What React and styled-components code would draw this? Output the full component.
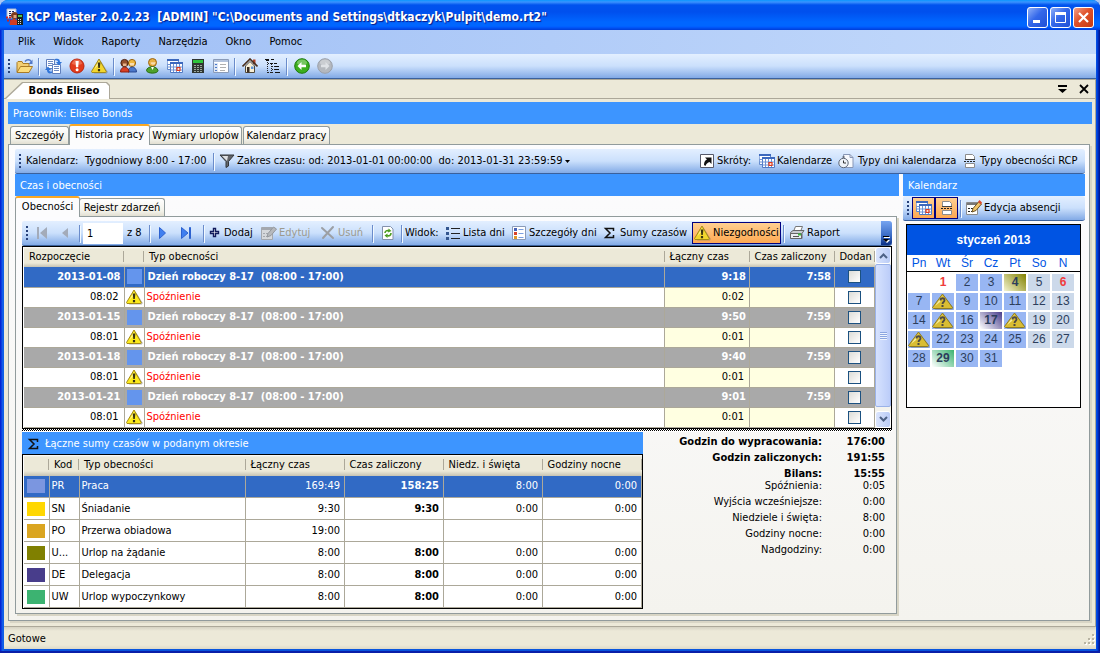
import React from "react";
import styled, { createGlobalStyle, css } from "styled-components";

const c = {
  chrome: "#ece9d8",
  bar: "#3d95ff",
  select: "#316ac5",
  group: "#a9a9a9",
  line: "#aca899",
  tabLine: "#919b9c",
};

const Global = createGlobalStyle`
  *, *::before, *::after { box-sizing: border-box; }
  html, body { margin: 0; background: #a9c8f5; }
  body, button, input, table {
    font-family: "DejaVu Sans Condensed", Tahoma, "DejaVu Sans", sans-serif;
    font-size: 11px;
    line-height: 14px;
    color: #000;
  }
  button, input { margin: 0; padding: 0; border: 0; background: none; border-radius: 0; }
  table { border-collapse: collapse; table-layout: fixed; }
  svg { display: block; flex: none; }
`;

/* ---------- icons ---------- */
const Svg = ({ w = 16, h = 16, children }) => (
  <svg width={w} height={h} viewBox={`0 0 ${w} ${h}`} aria-hidden="true">{children}</svg>
);
const AppIcon = () => (
  <Svg w={18} h={18}>
    <path d="M1 1h9v9H1z" fill="#f4f6fa" stroke="#a9b6cf" />
    <path d="M3 3.500h5M3 5.500h3M3 7.500h3" stroke="#1d2a66" strokeDasharray="2 1" />
    <path d="M0 9.500h5M1 12.500h4" stroke="#c22" strokeWidth="2" strokeDasharray="2 1" />
    <circle cx="8.500" cy="7.500" r="3.500" fill="#7c3a1c" />
    <path d="M7.500 7h3v3h-3z" fill="#e2a679" />
    <path d="M3.500 17c0-8 9-8 9 0z" fill="#d23b22" />
    <path d="M11 6h6v11h-6z" fill="#1c221e" />
    <path d="M12 7h4v2h-4z" fill="#4fc64f" />
    <path d="M12 11.500h4M12 13.500h4M12 15.500h4" stroke="#ddd" strokeDasharray="1 1" />
  </Svg>
);
const Folder = () => (
  <Svg w={18} h={16}>
    <path d="M1 14V4.500L2 3.500h4l1 2h6v3" fill="#f3cf72" stroke="#a97b26" />
    <path d="M1 14.500 4.500 8.500H16.500L13 14.500z" fill="#fbdc7c" stroke="#a97b26" />
    <path d="M9 3.500c2-2.500 5-2 6 0" fill="none" stroke="#5078c8" strokeWidth="1.400" />
    <path d="M16.500 1.500V6h-4z" fill="#5078c8" />
  </Svg>
);
const Sync = () => (
  <Svg w={18} h={16}>
    <path d="M1.500 1.500h8v9h-8z" fill="#fff" stroke="#5f7fbd" />
    <path d="M7.500 6.500h8v9h-8z" fill="#fff" stroke="#5f7fbd" />
    <path d="M3 3.500h5M3 5.500h5M3 7.500h5M9 8.500h5M9 10.500h5M9 12.500h5" stroke="#6d8ac2" />
    <path d="M10 1c3-1 5 0 5 3h2l-3 3.500L11 4h2c0-1-1-2-3-1.500z" fill="#2f74d8" />
    <path d="M7 15c-3 1-5 0-5-3H0l3-3.500L6 12H4c0 1 1 2 3 1.500z" fill="#2f74d8" />
  </Svg>
);
const RedAlert = () => (
  <Svg>
    <circle cx="8" cy="8" r="7" fill="#e23b1c" stroke="#b8260f" />
    <path d="M3 6a5 4.500 0 0 1 10 0 8 4 0 0 1-10 0z" fill="#f58a6e" opacity=".6" />
    <path d="M6.500 3h3.200L9.200 9.300H7z" fill="#fff" />
    <circle cx="8.100" cy="11.700" r="1.500" fill="#fff" />
  </Svg>
);
const Warn = ({ bright }) => (
  <Svg w={17} h={16}>
    <path d="M9.500 2.500 16.800 14l-1 1.500H3z" fill="#7d7a66" opacity=".55" />
    <path d="M8 1 15.200 13.500 14.500 14.500H1L.5 13.500z" fill={bright ? "#fcea1c" : "#f2d62e"} stroke="#a58b16" strokeLinejoin="round" />
    <path d="M8 2.500 3.500 11 6.500 7.500z" fill="#fff9b8" />
    <path d="M6.700 4.500h2.700l-.6 5.500H7.300zM6.900 11h2.200v2.200H6.900z" fill="#3a3410" />
  </Svg>
);
const DayWarn = () => (
  <Svg w={22} h={17}>
    <path d="M11.500 2 21.500 15l-1 1.500H3z" fill="#6c6a5a" opacity=".6" />
    <path d="M10.500 1 20.500 14.500l-1 1H1.500l-1-1z" fill="#d9bd33" stroke="#8f7c22" strokeLinejoin="round" />
    <path d="M10.500 2.500 3 13 8 9z" fill="#f8ee9c" />
    <path d="M8.500 7.500c0-3 4-3 4 0 0 1.500-2 1.500-2 3.500" fill="none" stroke="#4d4a44" strokeWidth="1.800" />
    <path d="M9.500 12h2v2h-2z" fill="#4d4a44" />
  </Svg>
);
const People = () => (
  <Svg w={17} h={16}>
    <circle cx="12" cy="5" r="3.600" fill="#efb73e" stroke="#9a6412" />
    <path d="M10 5h4v2.500h-4z" fill="#f8dcb0" />
    <path d="M8 14c0-6.500 8.500-6.500 8.500 0z" fill="#4b77c9" stroke="#27468f" />
    <circle cx="4.500" cy="5" r="3.600" fill="#94502c" stroke="#4a2110" />
    <path d="M3 5.500h3.500V8H3z" fill="#e8b48c" />
    <path d="M.5 14c0-6.500 8.500-6.500 8.500 0z" fill="#da3f24" stroke="#8c1d0c" />
  </Svg>
);
const Person = () => (
  <Svg>
    <circle cx="8.500" cy="4.500" r="4" fill="#e9b044" stroke="#9a6412" />
    <path d="M6.500 4.500c2-.5 4-.5 5 0-.3 3-4.500 3-5 0z" fill="#f8dcb0" />
    <path d="M2.500 12.500C3 7.500 13 7.500 14 12.500c0 3.500-11 3.500-11.500 0z" fill="#4ea12c" stroke="#276b12" />
    <path d="M7 9h3l-1.500 3z" fill="#fff" />
  </Svg>
);
const CalGrid = () => (
  <Svg>
    <path d="M0 1.500h11.500v10H.5z" fill="#fff" stroke="#5e86cb" />
    <path d="M3.500 4.500h12v10h-12z" fill="#fff" stroke="#4f79c4" />
    <path d="M0 1h12v2H0zM3 4h13v2H3z" fill="#3c68bd" />
    <path d="M.5 6.500h3M.5 9h15M3.500 12h12M6.500 6v8M9.500 6v8M12.500 6v8" stroke="#6d92d4" />
    <path d="M10 9.500h3v3h-3z" fill="#ffd9ce" stroke="#e03a1c" strokeWidth="1.200" />
  </Svg>
);
const Calculator = () => (
  <Svg>
    <path d="M2 1h12v14H2z" fill="#303632" />
    <path d="M3 2h10v3H3z" fill="#2fc43c" />
    <path d="M4 7.500h9M4 9.500h9M4 11.500h9M4 13.500h9" stroke="#9aa79d" strokeDasharray="2 1" />
  </Svg>
);
const Listing = () => (
  <Svg>
    <path d="M.5 1.500h15v13H.5z" fill="#fff" stroke="#8a9bb8" />
    <path d="M1 2h14v2H1z" fill="#b3c3dd" />
    <path d="M1 5h4v9H1z" fill="#dce6f5" />
    <path d="M2 6.500h2M2 9.500h2M2 12.500h2" stroke="#4c79c9" />
    <path d="M7 6.500h6M7 9.500h6M7 12.500h5" stroke="#b0b0b0" />
  </Svg>
);
const Home = () => (
  <Svg>
    <path d="M11 1.500h2.500V6H11z" fill="#b34228" />
    <path d="M3.500 8v6.500h9V8L8 3.500z" fill="#f7eed5" stroke="#51493a" />
    <path d="M.5 8.500 8 1l7.500 7.500" fill="none" stroke="#4a2f1c" strokeWidth="1.600" />
    <path d="M5 9h2.500v5.500H5z" fill="#3b2c20" />
    <path d="M9 8.500h2.500V11H9z" fill="#5d93d8" />
  </Svg>
);
const Tree = () => (
  <Svg>
    <path d="M2.500 2v13M3 5.500h3M6.500 6v9M7 8.500h3M7 11.500h3M3 14.500h6" fill="none" stroke="#222" strokeDasharray="1 1" />
    <path d="M0 1.500h4M6 1.500h3M5 5.500h3M9 5.500h3M10 8.500h4M10 11.500h4M10 14.500h5" stroke="#111" />
    <path d="M1 2.500h3" stroke="#111" />
  </Svg>
);
const NavArrow = ({ off }) => (
  <Svg>
    <circle cx="8" cy="8" r="7.300" fill={off ? "#b4b8be" : "#3cae1e"} stroke={off ? "#9a9fa8" : "#1c7a0c"} />
    <ellipse cx="8" cy="4.500" rx="5" ry="3" fill="#fff" opacity=".3" />
    <path d={off ? "M12.500 8 8.500 4v2.700H4v2.600h4.500V12z" : "M3.500 8l4-4v2.700H12v2.600H7.500V12z"} fill={off ? "#dfe2e6" : "#fff"} />
  </Svg>
);
const Funnel = () => (
  <Svg>
    <path d="M1 2h14L9.500 8.500V13L7 14.500v-6z" fill="#63666b" stroke="#33363a" />
    <path d="M3 3h6L8 8z" fill="#dfe1e4" />
  </Svg>
);
const Shortcut = () => (
  <Svg>
    <path d="M1.500 1.500h13v13h-13z" fill="#fff" stroke="#55596a" />
    <path d="M5 12c0-3 1-4.500 3-5.500L6 4.500h6.500V11l-2-2C8 10 7 11 6.500 13z" fill="#111" />
  </Svg>
);
const ClockDoc = () => (
  <Svg>
    <path d="M5.500 1.500h6.500l3 3v10H7z" fill="#f7f9fd" stroke="#8796b5" />
    <path d="M12 1.500v3h3" fill="none" stroke="#8796b5" />
    <circle cx="5.500" cy="10" r="4.700" fill="#eef2f8" stroke="#5c6676" />
    <path d="M5.500 7.500V10H8M4.500 4h2" fill="none" stroke="#333" />
  </Svg>
);
const PageBreak = () => (
  <Svg>
    <path d="M3.500 6.500v-5h7l2 2v3z" fill="#fff" stroke="#8c8c8c" />
    <path d="M2 8.500h12" stroke="#222" strokeDasharray="2 1" />
    <path d="M3.500 10.500h9v4h-9z" fill="#fff" stroke="#8c8c8c" />
    <path d="M3 6.500h10" stroke="#444" />
  </Svg>
);
const EditPage = ({ off }) => (
  <Svg>
    <path d="M.5 2.500h11v12H.5z" fill={off ? "#d5d8dc" : "#fff"} stroke={off ? "#a4a8ae" : "#8c8c8c"} />
    <path d="M1 3h10v2H1z" fill={off ? "#a4a8ae" : "#777"} />
    <path d="M2 8.500h5M2 11.500h4" stroke={off ? "#a4a8ae" : "#222"} strokeDasharray="2 1" />
    <path d="M6 12 7 8.500 12.500 2l3 2L10 10.500z" fill={off ? "#b6b9bd" : "#f0c46a"} stroke={off ? "#94989e" : "#6d5424"} />
    {!off && <path d="m12 2 3 2.500 1-2L13.500 0z" fill="#df4a2a" />}
  </Svg>
);
const First = () => (
  <Svg><path d="M3 2h2v12H3zM13 2v12L6 8z" fill="#a3abb9" /></Svg>
);
const Prev = () => (
  <Svg><path d="M11 3v10L5 8z" fill="#a3abb9" /></Svg>
);
const Next = () => (
  <Svg><path d="M5.500 2.500v11L11.500 8z" fill="#3f7ff0" stroke="#2d62cf" /></Svg>
);
const Last = () => (
  <Svg><path d="M3.500 2.500v11L10 8zM11.500 2.500h1v11h-1z" fill="#3f7ff0" stroke="#2d62cf" /></Svg>
);
const Plus = () => (
  <Svg w={12} h={12}><path d="M4.500 1.500h2v3h3v2h-3v3h-2v-3h-3v-2h3z" fill="#fff" stroke="#101a5c" strokeWidth="1.400" /></Svg>
);
const Cross = () => (
  <Svg><path d="M2 3l11 10M13 2 3 13" stroke="#9c9fa4" strokeWidth="2" strokeLinecap="round" /></Svg>
);
const Refresh = () => (
  <Svg w={14} h={16}>
    <path d="M1.500 1.500h8l2.500 2.500v10.500H1.500z" fill="#fff" stroke="#8391ac" />
    <path d="M4 8c0-2 2-3 4-2M10 8c0 2.500-2 3.500-4 2.500" fill="none" stroke="#4b9c1e" strokeWidth="1.600" />
    <path d="M7.500 3.500 10.500 6 7 7.500zM6.500 8.500V13l-3-2.500z" fill="#4b9c1e" />
  </Svg>
);
const Bullets = () => (
  <Svg>
    <path d="M6 3.500h9M6 8.500h9M6 13.500h9" stroke="#222" />
    <path d="M1 2h3v3H1zM1 7h3v3H1zM1 12h3v3H1z" fill="#34568f" />
  </Svg>
);
const Details = () => (
  <Svg w={14} h={16}>
    <path d="M.5 1.500h13v13H.5z" fill="#fff" stroke="#8a9bb8" />
    <path d="M6.500 4.500h5M6.500 8.500h5M6.500 12.500h5" stroke="#7a9fe0" />
    <path d="M2 3h3v3H2z" fill="#4762b8" /><path d="M2 7h3v3H2z" fill="#d8432a" /><path d="M2 11h3v3H2z" fill="#e09a2a" />
  </Svg>
);
const Sigma = () => (
  <Svg w={14} h={14}>
    <path d="M10.500 5V2.500H2.500L7 7l-4.500 4.500h8V9" fill="none" stroke="#111" strokeWidth="1.500" />
  </Svg>
);
const Printer = () => (
  <Svg>
    <path d="M4.500 6.500 6.500 1.500h7l-2 5z" fill="#fff" stroke="#777" />
    <path d="M1.500 7.500 4 5.500h11l-2 3v5h-11z" fill="#c9ccd2" stroke="#666" />
    <path d="M1.500 8.500h11v5h-11z" fill="#ebedf0" stroke="#666" />
    <path d="M4 11.500h6" stroke="#555" /><path d="M9 9.500h3" stroke="#3cba3c" strokeWidth="2" />
  </Svg>
);
const Caret = () => (
  <Svg w={7} h={5}><path d="M1 1h5L3.500 4z" fill="#000" /></Svg>
);
const Overflow = () => (
  <Svg w={7} h={8}><path d="M1 2h6v1H1zM1 5h6L4 8z" fill="#fff" /><path d="M0 1h6v1H0zM0 4h6L3 7z" fill="#000" /></Svg>
);
const TabMenu = () => (
  <Svg w={9} h={8}><path d="M0 0h9v2H0zM0 4h9L4.500 8z" fill="#000" /></Svg>
);
const TabClose = () => (
  <Svg w={10} h={10}><path d="M1 1l8 8M9 1 1 9" stroke="#000" strokeWidth="1.800" /></Svg>
);
const Chevron = ({ up }) => (
  <Svg w={9} h={6}><path d={up ? "M1 5l3.500-3.500L8 5" : "M1 1l3.500 3.500L8 1"} fill="none" stroke="#4d6185" strokeWidth="2" /></Svg>
);

/* ---------- window frame ---------- */
const Window = styled.div`
  min-height: 100vh;
  display: flex;
  flex-direction: column;
  padding: 0 4px 4px;
  border-radius: 8px 8px 0 0;
  background: linear-gradient(90deg, #0019cf 0, #0831d9 1px, #166aee 3px, #0855dd 4px, #0855dd calc(100% - 4px), #0046e8 calc(100% - 3px), #001ea0 calc(100% - 1px), #00138c 100%);
  overflow: hidden;
  box-shadow: inset 0 -2px 0 #0a1fa8;
`;
const TitleBar = styled.header`
  height: 30px;
  margin: 0 -4px;
  padding: 4px 6px 0;
  display: flex;
  align-items: center;
  gap: 2px;
  background: linear-gradient(#0997ff 0, #3a93ff 2px, #0053ee 5px, #0050ee 12px, #0066ff 22px, #0066ff 26px, #005bff 27px, #003dd7 30px);
`;
const Title = styled.h1`
  flex: 1;
  margin: 0;
  font-size: 12px;
  font-weight: bold;
  line-height: 18px;
  color: #fff;
  text-shadow: 1px 1px 1px #0a1883;
  white-space: pre;
`;
const CaptionButton = styled.button`
  width: 21px;
  height: 21px;
  display: grid;
  place-items: center;
  border: 1px solid #fff;
  border-radius: 3px;
  background: ${(p) => (p.$close ? "linear-gradient(135deg, #f0a08a, #e0512a 45%, #c63a12)" : "linear-gradient(135deg, #8fb0f8, #3468ea 45%, #1f50d6)")};
`;
const MenuBar = styled.nav`
  height: 24px;
  display: flex;
  align-items: center;
  padding-left: 5px;
  background: linear-gradient(90deg, #9ebef5, #c4dafb);
`;
const MenuItem = styled.button`
  height: 22px;
  padding: 0 9px;
`;

/* ---------- toolbars ---------- */
const ToolStrip = styled.div`
  height: 25px;
  display: flex;
  align-items: center;
  padding-left: 4px;
  white-space: nowrap;
  background: linear-gradient(#e3efff, #cbe0fc 50%, #82aae6);
  border-bottom: 1px solid #3b619c;
  border-radius: ${(p) => (p.$square ? "0" : "2px 3px 3px 2px")};
`;
const Grip = styled.span`
  width: 2px;
  height: 14px;
  flex: none;
  margin-right: ${(p) => p.$gap || 3}px;
  background: repeating-linear-gradient(#27417a 0 2px, transparent 2px 4px);
`;
const Separator = styled.span`
  width: 1px;
  height: 17px;
  flex: none;
  margin: 0 3px 0 2px;
  background: #6a8ccb;
  box-shadow: 1px 1px 0 #f1f9ff;
`;
const ToolButton = styled.button`
  width: ${(p) => (p.$w ? `${p.$w}px` : "23px")};
  height: 22px;
  flex: none;
  display: flex;
  align-items: center;
  justify-content: ${(p) => (p.$label ? "flex-start" : "center")};
  gap: ${(p) => p.$gap || 3}px;
  white-space: nowrap;
  color: ${(p) => (p.disabled ? "#9c9a8e" : "#000")};
  ${(p) => p.$label && css`padding-left: 2px;`}
  ${(p) => p.$on && css`
    border: 1px solid #000080;
    background: linear-gradient(#ffd091, #fea851);
    padding-left: ${p.$label ? 1 : 0}px;
  `}
`;
const ToolText = styled.span`
  flex: none;
  width: ${(p) => p.$w}px;
`;
const Spacer = styled.span`
  flex: 1;
`;
const PageInput = styled.input`
  width: 40px;
  height: 21px;
  padding: 0 4px;
  background: #fff;
  margin-right: 4px;
`;
const OverflowButton = styled.button`
  align-self: stretch;
  width: 11px;
  display: flex;
  justify-content: center;
  align-items: flex-end;
  padding-bottom: 2px;
  border-radius: 0 3px 3px 0;
  background: linear-gradient(#76a4f0, #3a6cc6 60%, #0a2f85);
`;

/* ---------- documents, tabs, panels ---------- */
const Workspace = styled.main`
  flex: 1;
  display: flex;
  flex-direction: column;
  background: ${c.chrome};
  border-top: 1px solid ${c.line};
  border-right: 1px solid ${c.line};
`;
const DocStrip = styled.div`
  height: 19px;
  display: flex;
  align-items: flex-end;
  gap: 12px;
  padding-right: 6px;
  border-bottom: 1px solid ${c.line};
`;
const DocTab = styled.button`
  position: relative;
  width: 106px;
  height: 17px;
  margin-bottom: -1px;
  padding-left: 14px;
  font-weight: bold;
  background: ${c.line};
  clip-path: polygon(0 100%, 18px 0, 103px 0, 100% 3px, 100% 100%);
  &::before {
    content: "";
    position: absolute;
    inset: 1px 1px 0 2px;
    background: #fff;
    clip-path: polygon(0 100%, 17px 0, 100px 0, 100% 3px, 100% 100%);
  }
  span { position: relative; }
`;
const IconButton = styled.button`
  height: 18px;
  display: grid;
  place-items: center;
`;
const DocBody = styled.div`
  flex: 1;
  display: flex;
  flex-direction: column;
  padding: 3px 3px 5px 4px;
`;
const Heading = styled.h2`
  height: 22px;
  margin: 0;
  display: flex;
  align-items: center;
  gap: 4px;
  padding: 2px 5px 0;
  font-size: 11px;
  font-weight: normal;
  color: #fff;
  background: ${c.bar};
`;
const Tabs = styled.div`
  height: 20px;
  display: flex;
  align-items: flex-end;
  padding-left: ${(p) => p.$inset || 0}px;
`;
const Tab = styled.button`
  position: relative;
  height: 18px;
  width: ${(p) => p.$w}px;
  margin-right: 1px;
  white-space: nowrap;
  border: 1px solid ${c.tabLine};
  border-bottom: 0;
  border-radius: 3px 3px 0 0;
  background: linear-gradient(#fff, #f3f2ea 70%, #e2dfd2);
  ${(p) => p.$on && css`
    z-index: 1;
    height: 21px;
    margin: 0 -1px -1px;
    padding-bottom: 2px;
    border-top: 2px solid #f9a825;
    background: #fcfcfd;
  `}
`;
const TabPanel = styled.section`
  flex: 1;
  display: flex;
  flex-direction: column;
  border: 1px solid ${c.tabLine};
  padding: 4px 4px 4px 6px;
  background: linear-gradient(#fcfcfe, #f4f3ee);
  box-shadow: 2px 2px 0 #d8d5c5;
  margin-right: 2px;
`;
const Split = styled.div`
  flex: 1;
  display: flex;
  gap: 4px;
`;
const LeftPane = styled.div`
  flex: 1;
  display: flex;
  flex-direction: column;
  padding-bottom: 2px;
`;
const RightPane = styled.aside`
  width: 182px;
`;

/* ---------- data grids ---------- */
const GridFrame = styled.div`
  display: flex;
  border: 1px solid #000;
  padding-left: 1px;
  background: #fff;
`;
const Grid = styled.table`
  width: 100%;
  flex: 1;
`;
const HeadCell = styled.th`
  height: ${(p) => p.$h || 20}px;
  padding: 0 5px;
  text-align: left;
  font-weight: normal;
  white-space: nowrap;
  overflow: hidden;
  background: linear-gradient(90deg, ${c.line}, ${c.line}) right 4px / 1px 11px no-repeat, linear-gradient(#fff 0, #ece9d8 2px, #ece9d8 16px, #c6c3b3 100%);
`;
const Row = styled.tr`
  height: ${(p) => p.$h}px;
  ${(p) => p.$kind === "group" && css`background: ${c.group}; color: #fff;`}
  ${(p) => p.$kind === "selected" && css`background: ${c.select}; color: #fff;`}
`;
const Cell = styled.td`
  padding: ${(p) => p.$pad || "0 3px"};
  border-bottom: 1px solid ${c.line};
  border-right: 1px solid ${c.line};
  text-align: ${(p) => p.$align || "left"};
  white-space: nowrap;
  overflow: hidden;
  text-overflow: ellipsis;
  font-weight: ${(p) => (p.$bold ? "bold" : "normal")};
  ${(p) => p.$tone && css`background: ${p.$tone};`}
  ${(p) => p.$red && css`color: #f00;`}
`;
const Swatch = styled.span`
  display: block;
  width: ${(p) => p.$w}px;
  height: ${(p) => p.$h}px;
  margin: 0 auto;
  background: ${(p) => p.$color};
`;
const Check = styled.input`
  appearance: none;
  display: block;
  width: 13px;
  height: 13px;
  margin: 0 auto;
  border: 1px solid #1c5180;
  background: linear-gradient(135deg, #dcdcd7, #fff);
`;
const ScrollBar = styled.div`
  width: 16px;
  display: flex;
  flex-direction: column;
  background: #f3f3ee;
`;
const ScrollButton = styled.button`
  height: 17px;
  display: grid;
  place-items: center;
  border: 1px solid #fff;
  border-radius: 3px;
  background: linear-gradient(90deg, #dbe5fd, #b9cbf6);
`;
const Thumb = styled.div`
  height: 143px;
  display: grid;
  place-items: center;
  border: 1px solid #9ab2e8;
  border-radius: 2px;
  background: linear-gradient(90deg, #d6e2fe, #bccdf9);
  &::before {
    content: "";
    width: 7px;
    height: 8px;
    background: repeating-linear-gradient(#8ca6e0 0 1px, #eef4fe 1px 2px);
  }
`;
const Splitter = styled.div`
  height: 3px;
  border-bottom: 1px solid #fff;
  background: repeating-conic-gradient(#000 0 25%, #fff 0 50%) 0 0 / 2px 2px;
`;
const Bottom = styled.div`
  display: flex;
  justify-content: space-between;
`;
const Summary = styled.section`
  width: 621px;
`;
const Totals = styled.div`
  padding: 2px 7px 0 0;
`;
const TotalsTable = styled.table`
  width: 210px;
  text-align: right;
  ${(p) => p.$strong ? css`font-weight: bold;` : css`margin-top: -4px;`}
  th, td { height: 16px; padding: 0; font-weight: inherit; white-space: nowrap; }
  th { text-align: right; width: 147px; }
`;

/* ---------- calendar ---------- */
const Month = styled.div`
  margin: 3px 4px 0 3px;
  height: 184px;
  border: 1px solid #000;
  background: #fff;
  font-family: "Liberation Sans", Arial, sans-serif;
`;
const MonthTitle = styled.h3`
  height: 30px;
  margin: 0;
  font-size: 12px;
  line-height: 30px;
  text-align: center;
  color: #fff;
  background: #0054e3;
`;
const MonthTable = styled.table`
  width: 100%;
  border-collapse: separate;
  border-spacing: 0;
  font-family: inherit;
  font-size: 12px;
  text-align: center;
  th { height: 17px; padding: 0; font-weight: normal; color: #0054e3; border-bottom: 1px solid #000; }
  td { padding: 0; border: solid #fff; border-width: 2px 1px 0; }
  th:last-child, td:last-child { width: 29px; padding-right: 5px; }
  tbody tr { height: 19px; }
`;
const Day = styled.span`
  height: 17px;
  display: grid;
  place-items: center;
  line-height: 17px;
  color: ${(p) => (p.$red ? "#f03c3c" : "#2c3e5c")};
  font-weight: ${(p) => (p.$bold ? "bold" : "normal")};
  background: ${(p) => p.$bg};
`;
const StatusBar = styled.footer`
  height: 23px;
  display: flex;
  align-items: center;
  justify-content: space-between;
  padding: 2px 0 0 4px;
  border-top: 1px solid ${c.line};
  background: linear-gradient(#d5d2c2, #ece9d8 4px, #ece9d8 18px, #dcd9c8);
`;

const days = [
  ["2013-01-08", "9:18", "7:58", "08:02", "0:02"],
  ["2013-01-15", "9:50", "7:59", "08:01", "0:01"],
  ["2013-01-18", "9:40", "7:59", "08:01", "0:01"],
  ["2013-01-21", "9:01", "7:59", "08:01", "0:01"],
];
const sums = [
  ["#7b96e0", "PR", "Praca", "169:49", "158:25", "8:00", "0:00"],
  ["#ffd700", "SN", "Śniadanie", "9:30", "9:30", "0:00", "0:00"],
  ["#daa520", "PO", "Przerwa obiadowa", "19:00", "", "", ""],
  ["#808000", "U...", "Urlop na żądanie", "8:00", "8:00", "0:00", "0:00"],
  ["#483d8b", "DE", "Delegacja", "8:00", "8:00", "0:00", "0:00"],
  ["#3cb371", "UW", "Urlop wypoczynkowy", "8:00", "8:00", "0:00", "0:00"],
];
const strongTotals = [["Godzin do wypracowania:", "176:00"], ["Godzin zaliczonych:", "191:55"], ["Bilans:", "15:55"]];
const totals = [["Spóźnienia:", "0:05"], ["Wyjścia wcześniejsze:", "0:00"], ["Niedziele i święta:", "8:00"], ["Godziny nocne:", "0:00"], ["Nadgodziny:", "0:00"]];
const weeks = [0, 1, 2, 3, 4].map((w) => [0, 1, 2, 3, 4, 5, 6].map((d) => w * 7 + d));
const warned = [8, 15, 18, 21];
const special = {
  4: "linear-gradient(45deg, #f4f4d0, #808000)",
  17: "linear-gradient(45deg, #fff, #483d8b)",
  29: "linear-gradient(45deg, #fff, #3cb371)",
};

function DayCell({ n, col }) {
  if (n < 1 || n > 31) return <td />;
  const bg = special[n] || (n === 1 ? "#fff" : col > 4 ? "#ccd9ea" : "#98b6f3");
  return (
    <td>
      <Day $bg={bg} $red={n === 1 || n === 6} $bold={n === 1 || n === 6 || !!special[n]} aria-label={String(n)}>
        {warned.includes(n) ? <DayWarn /> : n}
      </Day>
    </td>
  );
}

function MainToolbar() {
  return (
    <ToolStrip $square role="toolbar" aria-label="Główny">
      <Grip />
      <ToolButton aria-label="Otwórz"><Folder /></ToolButton>
      <Separator />
      <ToolButton aria-label="Synchronizuj"><Sync /></ToolButton>
      <ToolButton aria-label="Błędy"><RedAlert /></ToolButton>
      <ToolButton aria-label="Ostrzeżenia"><Warn /></ToolButton>
      <Separator />
      <ToolButton aria-label="Pracownicy"><People /></ToolButton>
      <ToolButton aria-label="Pracownik"><Person /></ToolButton>
      <ToolButton aria-label="Kalendarze"><CalGrid /></ToolButton>
      <ToolButton aria-label="Kalkulator"><Calculator /></ToolButton>
      <ToolButton aria-label="Lista"><Listing /></ToolButton>
      <Separator />
      <ToolButton aria-label="Start"><Home /></ToolButton>
      <ToolButton aria-label="Struktura"><Tree /></ToolButton>
      <Separator />
      <ToolButton aria-label="Wstecz"><NavArrow /></ToolButton>
      <ToolButton aria-label="Dalej" disabled><NavArrow off /></ToolButton>
    </ToolStrip>
  );
}

function RangeToolbar() {
  return (
    <ToolStrip role="toolbar" aria-label="Zakres">
      <Grip $gap={5} />
      <ToolText $w={59}>Kalendarz:</ToolText>
      <ToolText $w={126}>Tygodniowy 8:00 - 17:00</ToolText>
      <Separator />
      <ToolButton $label $w={352} $gap={2}><Funnel />Zakres czasu: od: 2013-01-01 00:00:00&nbsp; do: 2013-01-31 23:59:59<Caret /></ToolButton>
      <Spacer />
      <ToolButton $label $w={60} $gap={2}><Shortcut />Skróty:</ToolButton>
      <ToolButton $label $w={79} $gap={2}><CalGrid />Kalendarze</ToolButton>
      <ToolButton $label $w={124} $gap={4}><ClockDoc />Typy dni kalendarza</ToolButton>
      <ToolButton $label $w={125} $gap={2}><PageBreak />Typy obecności RCP</ToolButton>
    </ToolStrip>
  );
}

function GridToolbar() {
  return (
    <ToolStrip role="toolbar" aria-label="Obecności">
      <Grip />
      <ToolButton $w={22} aria-label="Pierwszy" disabled><First /></ToolButton>
      <ToolButton $w={24} aria-label="Poprzedni" disabled><Prev /></ToolButton>
      <Separator />
      <PageInput aria-label="Pozycja" defaultValue="1" />
      <ToolText $w={20}>z 8</ToolText>
      <Separator />
      <ToolButton $w={18} aria-label="Następny"><Next /></ToolButton>
      <ToolButton $w={30} aria-label="Ostatni"><Last /></ToolButton>
      <Separator />
      <ToolButton $label $w={52}><Plus />Dodaj</ToolButton>
      <ToolButton $label $w={59} $gap={2} disabled><EditPage off />Edytuj</ToolButton>
      <ToolButton $label $w={52} $gap={2} disabled><Cross />Usuń</ToolButton>
      <Separator />
      <ToolButton aria-label="Odśwież"><Refresh /></ToolButton>
      <Separator />
      <ToolText $w={38}>Widok:</ToolText>
      <ToolButton $label $w={67} $gap={2}><Bullets />Lista dni</ToolButton>
      <ToolButton $label $w={91}><Details />Szczegóły dni</ToolButton>
      <ToolButton $label $w={91}><Sigma />Sumy czasów</ToolButton>
      <ToolButton $label $w={89} $gap={2} $on><Warn />Niezgodności</ToolButton>
      <Separator />
      <ToolButton $label $w={60} $gap={2}><Printer />Raport</ToolButton>
      <Spacer />
      <OverflowButton aria-label="Więcej"><Overflow /></OverflowButton>
    </ToolStrip>
  );
}

function PresenceGrid() {
  return (
    <GridFrame>
      <Grid>
        <colgroup>
          <col style={{ width: 100 }} /><col style={{ width: 20 }} /><col /><col style={{ width: 85 }} /><col style={{ width: 85 }} /><col style={{ width: 40 }} />
        </colgroup>
        <thead>
          <tr>
            <HeadCell>Rozpoczęcie</HeadCell><HeadCell aria-label="Kolor" /><HeadCell>Typ obecności</HeadCell>
            <HeadCell>Łączny czas</HeadCell><HeadCell>Czas zaliczony</HeadCell><HeadCell>Dodan</HeadCell>
          </tr>
        </thead>
        <tbody>
          {days.map(([date, total, counted, time, late], i) => (
            <React.Fragment key={date}>
              <Row $h={20} $kind={i ? "group" : "selected"}>
                <Cell $align="right" $bold>{date}</Cell>
                <Cell $pad="0"><Swatch $w={15} $h={15} $color="#6495ed" /></Cell>
                <Cell $bold>Dzień roboczy 8-17&nbsp; (08:00 - 17:00)</Cell>
                <Cell $align="right" $bold>{total}</Cell>
                <Cell $align="right" $bold>{counted}</Cell>
                <Cell $pad="0"><Check type="checkbox" aria-label={`Dodany ${date}`} /></Cell>
              </Row>
              <Row $h={20}>
                <Cell $align="right" $pad="0 5px">{time}</Cell>
                <Cell $pad="0 0 0 1px"><Warn bright /></Cell>
                <Cell $red $pad="0 2px">Spóźnienie</Cell>
                <Cell $align="right" $pad="0 5px" $tone="#ffffe1">{late}</Cell>
                <Cell $tone="#ffffe1" />
                <Cell $pad="0"><Check type="checkbox" aria-label={`Dodany ${date} ${time}`} /></Cell>
              </Row>
            </React.Fragment>
          ))}
        </tbody>
      </Grid>
      <ScrollBar>
        <ScrollButton aria-label="W górę"><Chevron up /></ScrollButton>
        <Thumb />
        <Spacer />
        <ScrollButton aria-label="W dół"><Chevron /></ScrollButton>
      </ScrollBar>
    </GridFrame>
  );
}

function SummaryGrid() {
  return (
    <Summary>
      <Heading><Sigma />Łączne sumy czasów w podanym okresie</Heading>
      <GridFrame>
        <Grid>
          <colgroup>
            <col style={{ width: 25 }} /><col style={{ width: 30 }} /><col /><col style={{ width: 99 }} /><col style={{ width: 99 }} /><col style={{ width: 99 }} /><col style={{ width: 99 }} />
          </colgroup>
          <thead>
            <tr>
              <HeadCell $h={21} aria-label="Kolor" />
              {["Kod", "Typ obecności", "Łączny czas", "Czas zaliczony", "Niedz. i święta", "Godziny nocne"].map((t) => <HeadCell $h={21} key={t}>{t}</HeadCell>)}
            </tr>
          </thead>
          <tbody>
            {sums.map(([color, code, name, ...vals], i) => (
              <Row key={code} $h={22} $kind={i ? "" : "selected"}>
                <Cell $pad="0"><Swatch $w={18} $h={14} $color={color} /></Cell>
                <Cell $pad="0 2px">{code}</Cell>
                <Cell $pad="0 2px">{name}</Cell>
                {vals.map((v, k) => <Cell key={k} $align="right" $bold={k === 1} $pad="0 4px">{v}</Cell>)}
              </Row>
            ))}
          </tbody>
        </Grid>
      </GridFrame>
    </Summary>
  );
}

function TotalRows({ rows, strong }) {
  return (
    <TotalsTable $strong={strong}>
      <tbody>
        {rows.map(([k, v]) => <tr key={k}><th scope="row">{k}</th><td>{v}</td></tr>)}
      </tbody>
    </TotalsTable>
  );
}

function CalendarPane() {
  return (
    <RightPane>
      <Heading>Kalendarz</Heading>
      <ToolStrip role="toolbar" aria-label="Kalendarz">
        <Grip />
        <ToolButton $on aria-label="Dni"><CalGrid /></ToolButton>
        <ToolButton $on aria-label="Absencje"><PageBreak /></ToolButton>
        <Separator />
        <ToolButton $label $w={110} $gap={2}><EditPage />Edycja absencji</ToolButton>
      </ToolStrip>
      <Month>
        <MonthTitle>styczeń 2013</MonthTitle>
        <MonthTable>
          <thead><tr>{["Pn", "Wt", "Śr", "Cz", "Pt", "So", "N"].map((d) => <th key={d}>{d}</th>)}</tr></thead>
          <tbody>{weeks.map((w) => <tr key={w[0]}>{w.map((n, i) => <DayCell key={n} n={n} col={i} />)}</tr>)}</tbody>
        </MonthTable>
      </Month>
    </RightPane>
  );
}

export default function App() {
  return (
    <>
      <Global />
      <Window>
        <TitleBar>
          <AppIcon />
          <Title>{'RCP Master 2.0.2.23  [ADMIN] "C:\\Documents and Settings\\dtkaczyk\\Pulpit\\demo.rt2"'}</Title>
          <CaptionButton aria-label="Minimalizuj"><Svg w={13} h={13}><path d="M2 9h7v3H2z" fill="#fff" /></Svg></CaptionButton>
          <CaptionButton aria-label="Maksymalizuj"><Svg w={13} h={13}><path d="M1.500 2v9.500h10V2" fill="none" stroke="#fff" /><path d="M1 1h11v3H1z" fill="#fff" /></Svg></CaptionButton>
          <CaptionButton $close aria-label="Zamknij"><Svg w={13} h={13}><path d="M2 2l9 9M11 2l-9 9" stroke="#fff" strokeWidth="2.200" /></Svg></CaptionButton>
        </TitleBar>
        <MenuBar>
          {["Plik", "Widok", "Raporty", "Narzędzia", "Okno", "Pomoc"].map((m) => <MenuItem key={m}>{m}</MenuItem>)}
        </MenuBar>
        <MainToolbar />
        <Workspace>
          <DocStrip>
            <DocTab><span>Bonds Eliseo</span></DocTab>
            <Spacer />
            <IconButton aria-label="Lista kart"><TabMenu /></IconButton>
            <IconButton aria-label="Zamknij kartę"><TabClose /></IconButton>
          </DocStrip>
          <DocBody>
            <Heading>Pracownik: Eliseo Bonds</Heading>
            <Tabs role="tablist" $inset={2}>
              <Tab role="tab" $w={59}>Szczegóły</Tab>
              <Tab role="tab" $w={81} $on aria-selected="true">Historia pracy</Tab>
              <Tab role="tab" $w={93}>Wymiary urlopów</Tab>
              <Tab role="tab" $w={87}>Kalendarz pracy</Tab>
            </Tabs>
            <TabPanel>
              <RangeToolbar />
              <Split>
                <LeftPane>
                  <Heading>Czas i obecności</Heading>
                  <Tabs role="tablist" $inset={1}>
                    <Tab role="tab" $w={65} $on aria-selected="true">Obecności</Tab>
                    <Tab role="tab" $w={86}>Rejestr zdarzeń</Tab>
                  </Tabs>
                  <TabPanel>
                    <GridToolbar />
                    <PresenceGrid />
                    <Splitter />
                    <Bottom>
                      <SummaryGrid />
                      <Totals>
                        <TotalRows rows={strongTotals} strong />
                        <TotalRows rows={totals} />
                      </Totals>
                    </Bottom>
                  </TabPanel>
                </LeftPane>
                <CalendarPane />
              </Split>
            </TabPanel>
          </DocBody>
        </Workspace>
        <StatusBar>
          Gotowe
          <Svg w={13} h={13}>
            {[[9, 1], [5, 5], [9, 5], [1, 9], [5, 9], [9, 9]].map(([x, y]) => (
              <g key={`${x}-${y}`}><path d={`M${x + 1} ${y + 1}h2v2h-2z`} fill="#fff" /><path d={`M${x} ${y}h2v2h-2z`} fill="#b8b4a3" /></g>
            ))}
          </Svg>
        </StatusBar>
      </Window>
    </>
  );
}
